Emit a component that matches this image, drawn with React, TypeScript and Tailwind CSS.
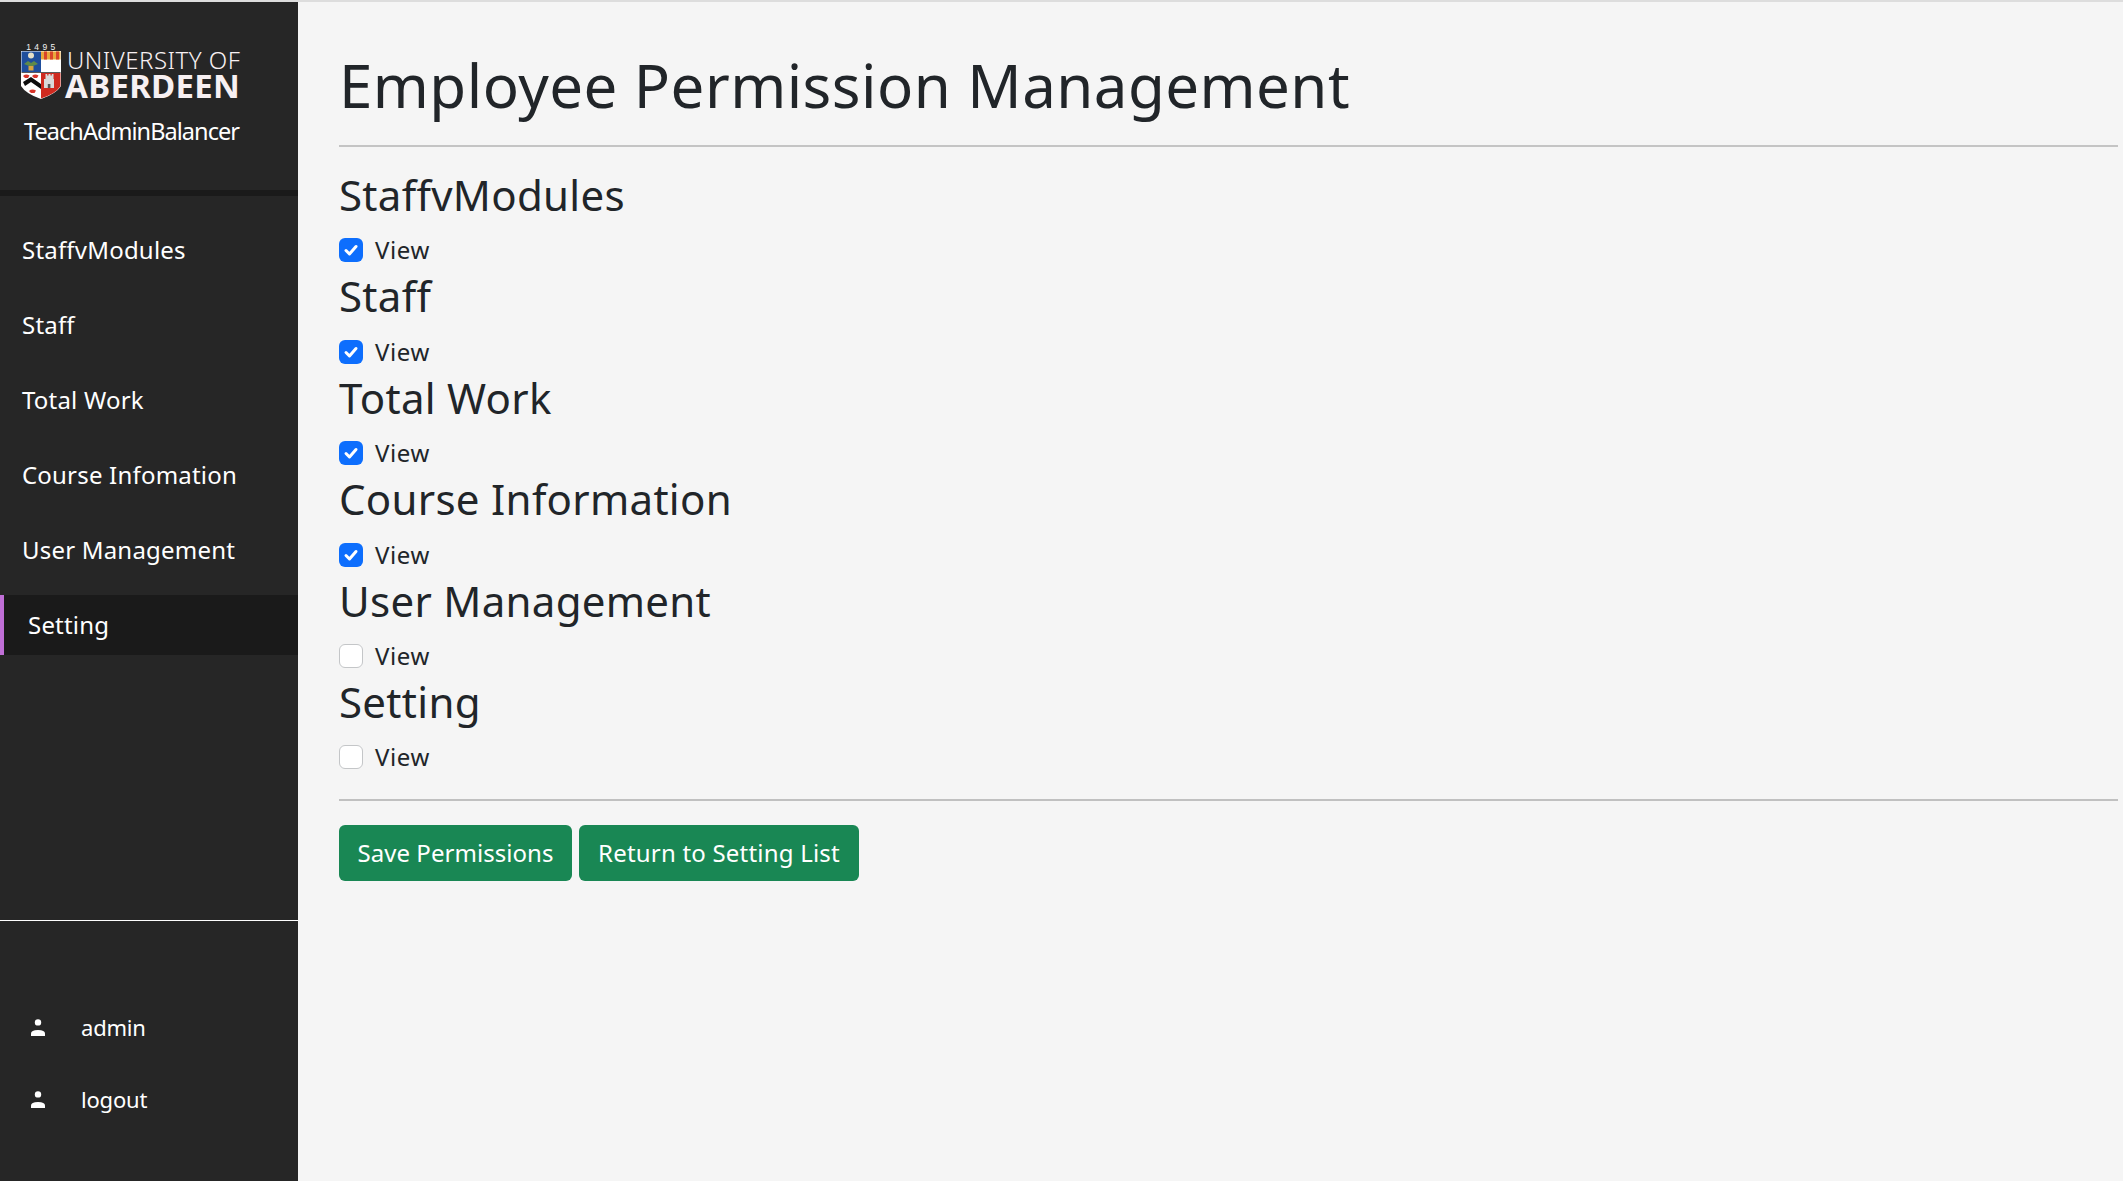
const font = { fontFamily: '"Noto Sans", sans-serif' };

function Shield() {
  return (
    <svg width="42" height="58" viewBox="0 0 42 58" className="shrink-0">
      <text x="22.5" y="7" textAnchor="middle" fontSize="8.5" letterSpacing="3.4" fill="#f2f2f2" fontFamily="Liberation Sans">1495</text>
      <path d="M1 8 H41 V43 Q36 51 21 56 Q6 51 1 43 Z" fill="#ffffff" />
      <rect x="1.5" y="8.5" width="19.5" height="20.5" fill="#1f4e9c" />
      <rect x="21" y="8.5" width="19.5" height="8" fill="#e8a83c" />
      <rect x="24" y="8.5" width="3" height="8" fill="#d8452a" />
      <rect x="30" y="8.5" width="3" height="8" fill="#d8452a" />
      <rect x="36" y="8.5" width="3" height="8" fill="#d8452a" />
      <circle cx="11" cy="12.5" r="3" fill="#e6e0c8" />
      <path d="M4 21 L8 18 L11 20 L14 18 L18 21 L13 23 L9 23 Z" fill="#5f8a4a" />
      <rect x="8.5" y="23" width="5" height="4.5" fill="#d9a441" />
      <rect x="1.5" y="29" width="39" height="0.8" fill="#333333" />
      <path d="M21 30 H40.5 V43 Q36 50.5 21 55.5 Z" fill="#cf2a1f" />
      <path d="M3 39 L11 34 L21 41 V46 L11 39 L5 43 Z" fill="#0d0d0d" />
      <path d="M3 33 q3 -2.5 6.5 -0.5 l-1.5 2.5 h-3 Z M12 33 q3 -2.5 6.5 -0.5 l-1.5 2.5 h-3 Z M9 48 q3 -2.5 7 -0.5 l-1.5 2.5 h-3.5 Z" fill="#d8352a" />
      <path d="M24 45 V36 h1.5 V31 h1.7 v1.5 h1.3 V31 h2 v1.5 h1.3 V31 h1.7 v5 H34 V45 Z" fill="#d9d9d9" />
      <rect x="27.8" y="41" width="2.6" height="4" fill="#555555" />
    </svg>
  );
}

function UserIcon() {
  return (
    <svg width="14" height="17" viewBox="0 0 14 17" fill="#ffffff" className="shrink-0">
      <circle cx="7" cy="3.4" r="3.2" />
      <path d="M0 17 V14.5 Q0 11 7 11 Q14 11 14 14.5 V17 Z" />
    </svg>
  );
}

function Section({ title, checked }: { title: string; checked: boolean }) {
  return (
    <div>
      <h3 className="text-[42px] leading-[50.4px] font-normal mb-3 tracking-[0.3px]">{title}</h3>
      <label className="flex items-center h-9 mb-[3px] text-2xl">
        {checked ? (
          <span className="w-6 h-6 rounded-[6px] bg-[#0d6efd] flex items-center justify-center">
            <svg width="20" height="20" viewBox="0 0 20 20" fill="none" stroke="#ffffff" strokeWidth="3" strokeLinecap="round" strokeLinejoin="round">
              <path d="M5 10.5 L8.5 14 L15 6.5" />
            </svg>
          </span>
        ) : (
          <span className="w-6 h-6 rounded-[6px] bg-white border border-[#c4c6c8]" />
        )}
        <span className="ml-3 tracking-[0.6px]">View</span>
      </label>
    </div>
  );
}

const nav = ["StaffvModules", "Staff", "Total Work", "Course Infomation", "User Management"];
const sections: [string, boolean][] = [
  ["StaffvModules", true],
  ["Staff", true],
  ["Total Work", true],
  ["Course Information", true],
  ["User Management", false],
  ["Setting", false],
];

export default function App() {
  return (
    <div style={font} className="h-[1181px] overflow-hidden bg-[#f5f5f5] text-[#212529] border-t-2 border-[#dddddd] flex">
      <aside className="w-[298px] shrink-0 bg-[#262626] text-white flex flex-col">
        <div className="h-[188px] px-5 pt-[41px] shrink-0">
          <div className="flex items-end">
            <Shield />
            <div className="ml-[5px] text-[#f7f0f2] mb-[-2px]">
              <div className="text-[24px] leading-[19px] tracking-[0.5px] font-light whitespace-nowrap">UNIVERSITY OF</div>
              <div className="text-[33px] leading-[34px] font-bold tracking-[0.3px] -ml-[2px]">ABERDEEN</div>
            </div>
          </div>
          <div className="text-[23.5px] leading-[34px] mt-[13px] ml-[4px] tracking-[-0.95px] whitespace-nowrap">TeachAdminBalancer</div>
        </div>
        <div className="h-[6px] bg-[#1a1a1a] shrink-0" />
        <nav className="pt-4 h-[724px] shrink-0 text-2xl tracking-[0.2px]">
          {nav.map((n) => (
            <div key={n} className="h-[75px] pl-[22px] flex items-center whitespace-nowrap">{n}</div>
          ))}
          <div className="h-[60px] mt-2 bg-[#1a1a1a] border-l-4 border-[#c06fd6] pl-6 flex items-center">Setting</div>
        </nav>
        <div className="h-px bg-white shrink-0" />
        <div className="pt-[70px] text-[22px] tracking-[-0.2px]">
          <div className="h-[72px] flex items-center pl-[31px]">
            <UserIcon />
            <span className="ml-[36px]">admin</span>
          </div>
          <div className="h-[72px] flex items-center pl-[31px]">
            <UserIcon />
            <span className="ml-[36px]">logout</span>
          </div>
        </div>
      </aside>
      <main className="flex-1 pl-[41px] pr-[5px]">
        <h1 className="text-[60px] leading-[72px] font-normal mt-[47px] mb-[24px] tracking-[0.45px]">Employee Permission Management</h1>
        <hr className="border-0 h-[2px] bg-[#c4c4c4] mb-[23px]" />
        {sections.map(([t, c]) => (
          <Section key={t} title={t} checked={c} />
        ))}
        <hr className="border-0 h-[2px] bg-[#c0c0c0] mt-[24px] mb-[24px]" />
        <div className="flex gap-[7px] text-2xl">
          <button className="h-14 w-[233px] rounded-[6px] bg-[#198754] text-white tracking-[0.05px]">Save Permissions</button>
          <button className="h-14 w-[280px] rounded-[6px] bg-[#198754] text-white tracking-[0.2px]">Return to Setting List</button>
        </div>
      </main>
    </div>
  );
}
